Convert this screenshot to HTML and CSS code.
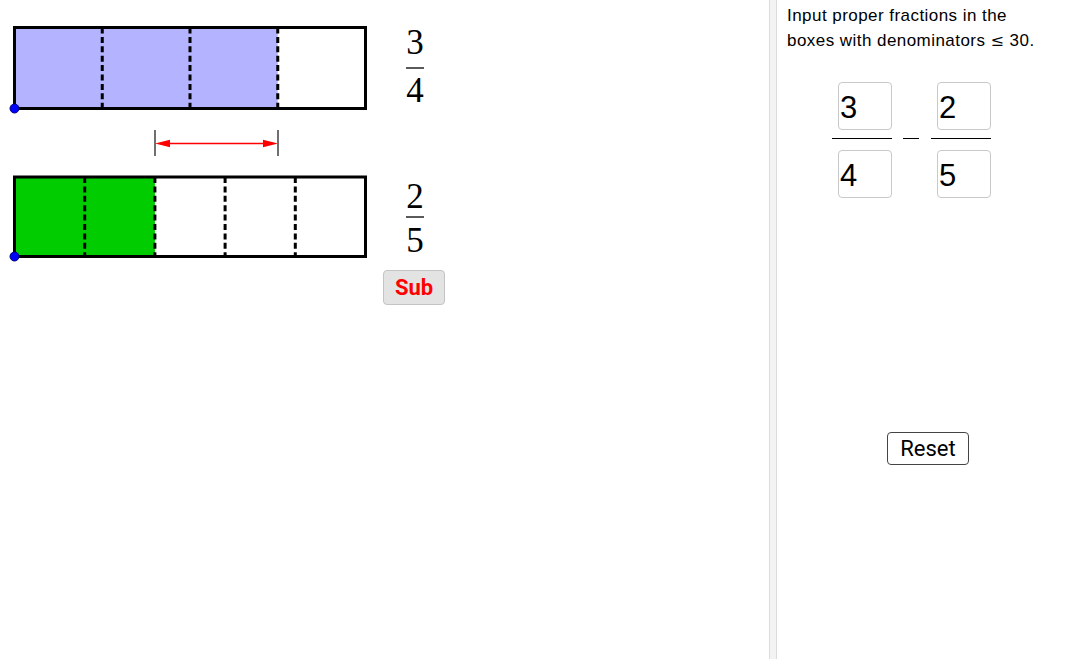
FILE: index.html
```html
<!DOCTYPE html>
<html lang="en">
<head>
<meta charset="utf-8">
<title>Subtract fractions</title>
<link rel="stylesheet" href="styles.css">
</head>
<body>
<div class="app">
  <div class="canvas">
    <svg class="board" width="769" height="659" viewBox="0 0 769 659">
      <!-- top bar: 3/4 -->
      <rect x="14.5" y="27.5" width="263.25" height="81" fill="#b3b3ff"/>
      <g stroke="#000" stroke-width="3" stroke-dasharray="6 3.4">
        <line x1="102.25" y1="27.5" x2="102.25" y2="108.5"/>
        <line x1="190" y1="27.5" x2="190" y2="108.5"/>
        <line x1="277.75" y1="27.5" x2="277.75" y2="108.5"/>
      </g>
      <rect x="14.5" y="27.5" width="351" height="81" fill="none" stroke="#000" stroke-width="3"/>
      <circle cx="14.5" cy="108.5" r="4.5" fill="#0000ff" stroke="#00007a" stroke-width="1"/>

      <!-- difference arrow -->
      <g stroke="#333" stroke-width="1.4">
        <line x1="155" y1="130" x2="155" y2="156"/>
        <line x1="278" y1="130" x2="278" y2="156"/>
      </g>
      <line x1="160" y1="143.5" x2="273" y2="143.5" stroke="#ff0000" stroke-width="1.4"/>
      <polygon points="155,143.5 170,139.8 170,147.2" fill="#ff0000"/>
      <polygon points="278,143.5 263,139.8 263,147.2" fill="#ff0000"/>

      <!-- bottom bar: 2/5 -->
      <rect x="14.5" y="177" width="140.4" height="79.5" fill="#00cc00"/>
      <g stroke="#000" stroke-width="3" stroke-dasharray="6 3.4">
        <line x1="84.7" y1="177" x2="84.7" y2="256.5"/>
        <line x1="154.9" y1="177" x2="154.9" y2="256.5"/>
        <line x1="225.1" y1="177" x2="225.1" y2="256.5"/>
        <line x1="295.3" y1="177" x2="295.3" y2="256.5"/>
      </g>
      <rect x="14.5" y="177" width="351" height="79.5" fill="none" stroke="#000" stroke-width="3"/>
      <circle cx="14.5" cy="256.5" r="4.5" fill="#0000ff" stroke="#00007a" stroke-width="1"/>

      <!-- fractions -->
      <text class="tex" x="415" y="54" text-anchor="middle">3</text>
      <text class="tex" x="415" y="102" text-anchor="middle">4</text>
      <text class="tex" x="415" y="208" text-anchor="middle">2</text>
      <text class="tex" x="415" y="252" text-anchor="middle">5</text>
      <line x1="406" y1="68" x2="424" y2="68" stroke="#000" stroke-width="1.3"/>
      <line x1="406" y1="217" x2="424" y2="217" stroke="#000" stroke-width="1.3"/>
    </svg>
    <button class="sub-btn" type="button">Sub</button>
  </div>
  <div class="divider"></div>
  <div class="panel">
    <p class="intro">Input proper fractions in the<br>boxes with denominators <span class="le">&le;</span> 30.</p>
    <div class="expr">
      <div class="frac">
        <div class="box">3</div>
        <div class="bar"></div>
        <div class="box">4</div>
      </div>
      <div class="minus"></div>
      <div class="frac">
        <div class="box">2</div>
        <div class="bar"></div>
        <div class="box">5</div>
      </div>
    </div>
    <button class="reset-btn" type="button">Reset</button>
  </div>
</div>
</body>
</html>
```

FILE: styles.css
```css
html, body {
  margin: 0;
  padding: 0;
  background: #ffffff;
  overflow: hidden;
}

.app {
  display: flex;
  width: 1083px;
  height: 659px;
}

.canvas {
  position: relative;
  width: 769px;
  height: 659px;
  flex: none;
}

.board {
  display: block;
}

.tex {
  font-family: "Liberation Serif", "Times New Roman", serif;
  font-size: 35px;
  font-weight: normal;
  fill: #000;
}

.sub-btn {
  position: absolute;
  left: 383px;
  top: 270px;
  width: 62px;
  height: 35px;
  margin: 0;
  padding: 0;
  background: #e3e3e3;
  border: 1px solid #c4c4c4;
  border-radius: 4px;
  color: #ff0000;
  font-family: Roboto, "Liberation Sans", sans-serif;
  font-weight: bold;
  font-size: 22px;
  line-height: 33px;
}

.divider {
  width: 6px;
  flex: none;
  background: #f3f3f3;
  border-left: 1px solid #dcdcdc;
  border-right: 1px solid #dcdcdc;
}

.panel {
  flex: 1;
  display: flex;
  flex-direction: column;
  align-items: flex-start;
}

.intro {
  margin: 0;
  padding: 3px 0 0 10px;
  font-family: "Liberation Sans", "DejaVu Sans", sans-serif;
  font-size: 17px;
  letter-spacing: 0.45px;
  line-height: 25px;
  color: #000;
}

.le {
  font-family: "DejaVu Serif", serif;
  font-size: 16px;
}

.expr {
  display: flex;
  align-items: flex-start;
  margin: 29px 0 0 55px;
}

.frac {
  display: flex;
  flex-direction: column;
  align-items: flex-end;
  width: 60px;
}

.box {
  box-sizing: border-box;
  width: 54px;
  height: 48px;
  border: 1px solid #c9c9c9;
  border-radius: 4px;
  padding: 0 0 0 1px;
  font-family: "Liberation Sans", Arial, sans-serif;
  font-size: 31px;
  line-height: 50px;
  color: #000;
}

.bar {
  width: 60px;
  height: 1px;
  background: #000;
  margin: 8px 0 11px 0;
}

.minus {
  width: 16px;
  height: 1px;
  background: #000;
  margin: 56px 12px 0 11px;
}

.reset-btn {
  margin: 234px 0 0 110px;
  box-sizing: border-box;
  width: 82px;
  height: 33px;
  padding: 0;
  background: #ffffff;
  border: 1px solid #444;
  border-radius: 4px;
  color: #000;
  font-family: Roboto, "Liberation Sans", sans-serif;
  font-size: 22px;
  line-height: 31px;
}
```
